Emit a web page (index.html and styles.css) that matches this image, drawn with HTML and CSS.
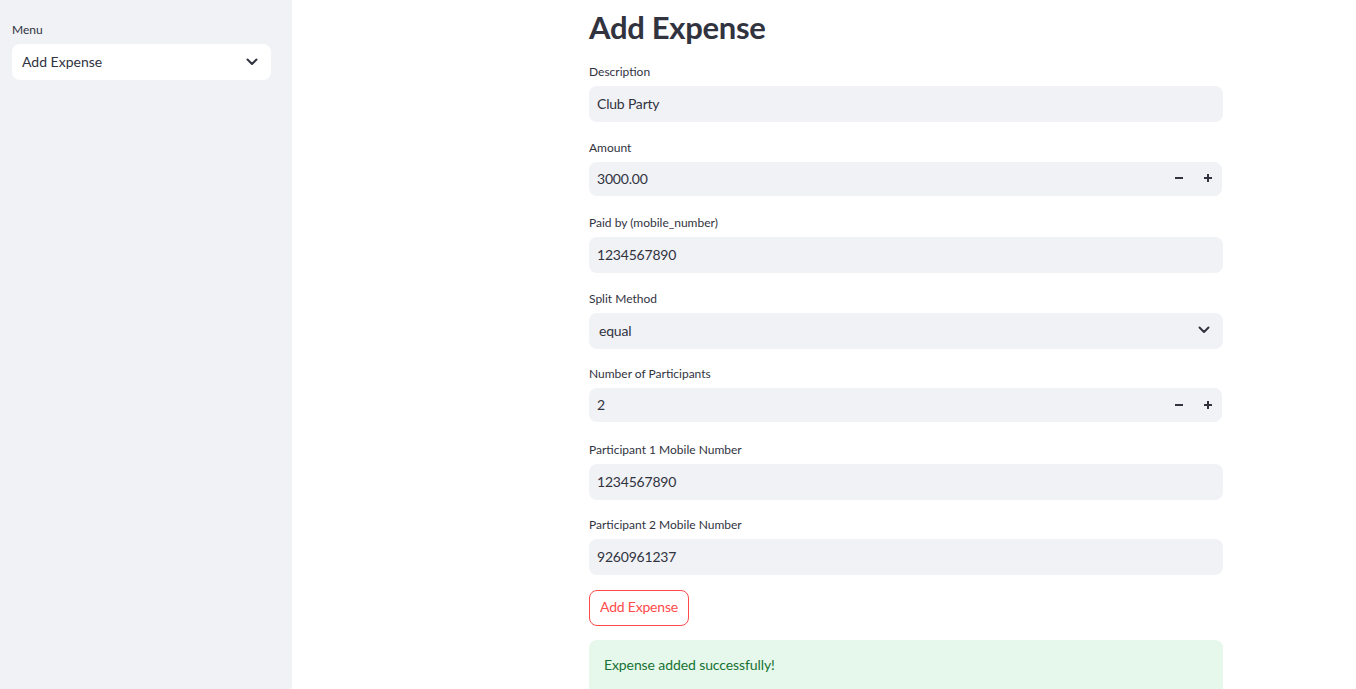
FILE: index.html
```html
<!DOCTYPE html>
<html>
<head>
<meta charset="utf-8">
<link rel="stylesheet" href="styles.css">
</head>
<body>
<div class="app">
  <aside class="sidebar">
    <div class="label side-label">Menu</div>
    <div class="select side-select">
      <span>Add Expense</span>
      <svg class="chev" viewBox="0 0 12 8" width="12" height="8"><path d="M1.5 1.5 L6 6 L10.5 1.5" fill="none" stroke="#31333f" stroke-width="2" stroke-linecap="round" stroke-linejoin="round"/></svg>
    </div>
  </aside>
  <main class="main">
    <div class="content">
      <h1 class="title">Add Expense</h1>

      <div class="field">
        <div class="label">Description</div>
        <div class="input">Club Party</div>
      </div>

      <div class="field">
        <div class="label">Amount</div>
        <div class="input number">
          <span>3000.00</span>
          <span class="steps"><span class="minus"></span><span class="plus"></span></span>
        </div>
      </div>

      <div class="field">
        <div class="label">Paid by (mobile_number)</div>
        <div class="input">1234567890</div>
      </div>

      <div class="field">
        <div class="label">Split Method</div>
        <div class="input select-main">
          <span>equal</span>
          <svg class="chev" viewBox="0 0 12 8" width="12" height="8"><path d="M1.5 1.5 L6 6 L10.5 1.5" fill="none" stroke="#31333f" stroke-width="2" stroke-linecap="round" stroke-linejoin="round"/></svg>
        </div>
      </div>

      <div class="field">
        <div class="label">Number of Participants</div>
        <div class="input number">
          <span>2</span>
          <span class="steps"><span class="minus"></span><span class="plus"></span></span>
        </div>
      </div>

      <div class="field">
        <div class="label">Participant 1 Mobile Number</div>
        <div class="input">1234567890</div>
      </div>

      <div class="field">
        <div class="label">Participant 2 Mobile Number</div>
        <div class="input">9260961237</div>
      </div>

      <button class="btn">Add Expense</button>

      <div class="success">Expense added successfully!</div>
    </div>
  </main>
</div>
</body>
</html>
```

FILE: styles.css
```css
* { box-sizing: border-box; }
html, body { margin: 0; padding: 0; height: 100%; overflow: hidden; }
body {
  font-family: "Lato", "Liberation Sans", sans-serif;
  color: #31333f;
  background: #ffffff;
}
.app { display: flex; height: 689px; }
.sidebar {
  width: 292px;
  flex: 0 0 292px;
  background: #f0f2f6;
  padding: 22px 21px 0 12px;
}
.label {
  font-size: 12px;
  line-height: 16px;
  color: #31333f;
  height: 16px;
}
.side-label { margin-bottom: 6px; }
.select, .input {
  display: flex;
  align-items: center;
  border-radius: 8px;
  font-size: 14px;
}
.side-select {
  background: #ffffff;
  height: 36px;
  padding: 0 13px 0 10px;
  justify-content: space-between;
  width: 259px;
}
.side-select span { margin-top: -1px; }
.chev { display: block; }
.main { flex: 1; padding-left: 297px; }
.content { width: 634px; }
.title {
  margin: 0;
  font-size: 31px;
  font-weight: 700;
  line-height: 40px;
  padding-top: 7px;
  height: 56px;
  letter-spacing: -0.3px;
}
.field { height: 75.5px; padding-top: 8px; }
.field .label { margin-bottom: 6px; }
.input {
  background: #f0f2f6;
  height: 36px;
  padding: 0 8px 1px;
  letter-spacing: -0.2px;
}
.input.number {
  height: 34px;
  width: 633px;
  justify-content: space-between;
  margin-top: 1.5px;
  padding-right: 0;
}
.steps { display: flex; height: 100%; }
.minus, .plus {
  position: relative;
  width: 29px;
  height: 100%;
  display: block;
}
.minus::before, .plus::before, .plus::after {
  content: "";
  position: absolute;
  background: #31333f;
  left: 50%;
  top: 50%;
}
.minus::before, .plus::before {
  width: 8px; height: 2px;
  margin-left: -4px; margin-top: -1px;
}
.plus::after {
  width: 2px; height: 8px;
  margin-left: -1px; margin-top: -4px;
}
.select-main {
  justify-content: space-between;
  padding: 0 13px 1px 10px;
}
.btn {
  display: block;
  margin-top: 5.5px;
  height: 36px;
  width: 100px;
  border: 1px solid #ff4b4b;
  border-radius: 8px;
  background: #ffffff;
  color: #ff4b4b;
  font-family: inherit;
  font-size: 14px;
  letter-spacing: -0.2px;
  padding: 0 0 3px;
}
.success {
  margin-top: 14px;
  background: #e6f8ec;
  color: #177233;
  border-radius: 8px;
  height: 60px;
  padding: 15px 15px 0;
  font-size: 14px;
  line-height: 20px;
  letter-spacing: -0.1px;
}
```
